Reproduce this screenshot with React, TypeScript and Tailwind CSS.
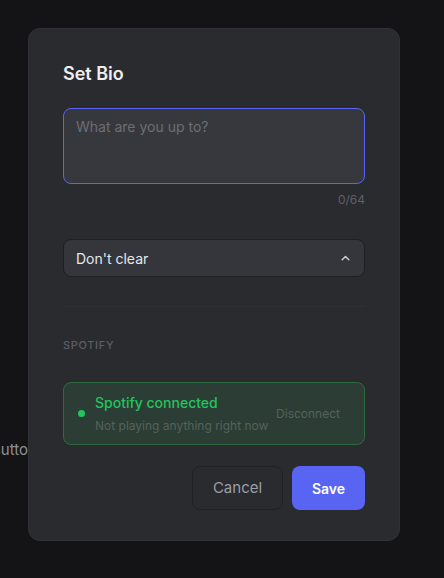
import React from 'react';

const App: React.FC = () => {
  return (
    <div
      className="relative h-[578px] w-[444px] overflow-hidden bg-[#141416]"
      style={{ fontFamily: 'Inter, "Noto Sans", sans-serif' }}
    >
      {/* page content behind the overlay */}
      <span className="absolute left-[-9px] top-[440px] text-[15px] leading-5 text-[#8e9097]">
        Button
      </span>

      {/* modal */}
      <div className="absolute left-[28px] top-[28px] w-[372px] rounded-xl border border-[#313237] bg-[#2a2b2f] px-[34px] pb-[30px] pt-8">
        <h2 className="text-[18px] font-semibold leading-[26px] text-[#eceef2]">Set Bio</h2>

        <div className="mt-[21px] h-[76px] rounded-lg border border-[#5865f2] bg-[#37383e] px-3 pt-[8px] text-[14px] leading-5 text-[#6c6e75]">
          What are you up to?
        </div>
        <div className="mt-[8px] text-right text-[12px] leading-4 text-[#5e6067]">0/64</div>

        <div className="mt-[31px] flex h-[38px] items-center justify-between rounded-lg border border-[#1e1f23] bg-[#35363b] pl-3 pr-[14px]">
          <span className="text-[14px] text-[#e4e6eb]">Don't clear</span>
          <svg width="9" height="6" viewBox="0 0 9 6" fill="none">
            <path d="M1.2 4.8 4.5 1.5l3.3 3.3" stroke="#c9ccd2" strokeWidth="1.5" strokeLinecap="round" strokeLinejoin="round" />
          </svg>
        </div>

        <div className="mt-[29px] h-px bg-[#2f3034]" />

        <div className="mt-[30px] text-[11px] font-medium uppercase leading-4 tracking-[0.06em] text-[#5b5e66]">
          Spotify
        </div>

        <div className="mt-[29px] flex h-[63px] items-center rounded-lg border border-[#2e6a3d] bg-[#2b3d34] pl-[14px] pr-6">
          <span className="h-[7px] w-[7px] rounded-full bg-[#22c55e]" />
          <div className="ml-[10px] flex-1">
            <div className="text-[14px] font-medium leading-5 text-[#22c55e]">Spotify connected</div>
            <div className="mt-[5px] text-[12px] leading-4 text-[#56625c]">Not playing anything right now</div>
          </div>
          <span className="text-[12px] text-[#56625c]">Disconnect</span>
        </div>

        <div className="mt-[21px] flex justify-end gap-[9px]">
          <button className="h-[44px] w-[91px] rounded-lg border border-[#202125] text-[15px] text-[#9a9ea6]">
            Cancel
          </button>
          <button className="h-[44px] w-[73px] rounded-lg bg-[#5865f2] text-[14px] font-semibold text-white">
            Save
          </button>
        </div>
      </div>
    </div>
  );
};

export default App;
